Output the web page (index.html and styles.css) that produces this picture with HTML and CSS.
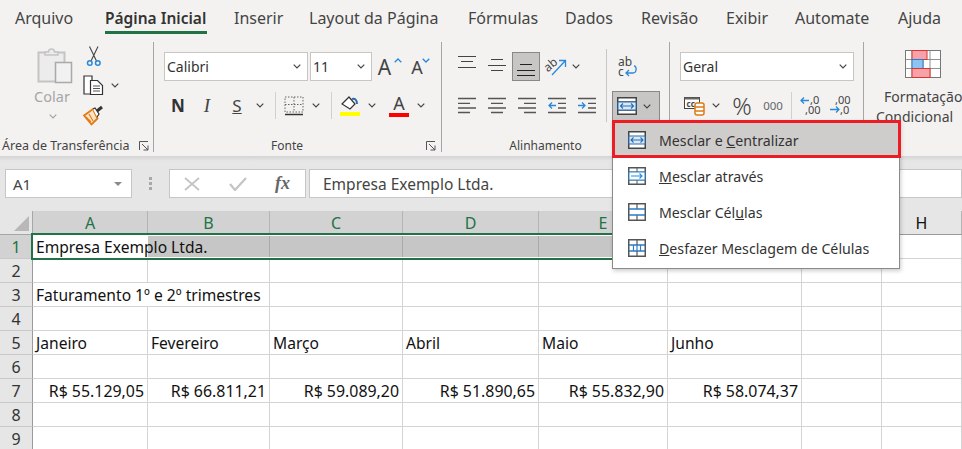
FILE: index.html
```html
<!DOCTYPE html>
<html lang="pt-BR">
<head>
  <meta charset="UTF-8" />
  <title>Mesclar e Centralizar</title>
  <link rel="stylesheet" href="styles.css">
</head>
<body>
  <svg class="sprite" width="0" height="0">
    <symbol id="chev" viewBox="0 0 8 5"><path d="M.7.7 4 4l3.3-3.3" fill="none" stroke="#444" stroke-width="1.2"/></symbol>
    <symbol id="launch" viewBox="0 0 10 10"><path d="M.5 9V.5H9M3 3l6 6M9 4.500V9H4.500" fill="none" stroke="#555" stroke-width="1"/></symbol>
  </svg>

  <nav class="tabs">
    <span class="tab t-arquivo">Arquivo</span>
    <span class="tab tab-active">Página Inicial</span>
    <span class="tab t-inserir">Inserir</span>
    <span class="tab t-layout">Layout da Página</span>
    <span class="tab t-formulas">Fórmulas</span>
    <span class="tab t-dados">Dados</span>
    <span class="tab t-revisao">Revisão</span>
    <span class="tab t-exibir">Exibir</span>
    <span class="tab t-automate">Automate</span>
    <span class="tab">Ajuda</span>
  </nav>

  <section class="ribbon">
    <div class="group g-clip">
      <div class="clip-body">
        <div class="paste">
          <svg width="36" height="38" viewBox="0 0 36 38">
            <rect x="1.500" y="6.500" width="26" height="29" fill="#ececec" stroke="#c4c4c4" stroke-width="2"/>
            <path d="M8 9V6h3.500a3 3 0 0 1 6 0H21v3z" fill="#ececec" stroke="#c4c4c4" stroke-width="1.500"/>
            <rect x="18.500" y="16.500" width="16" height="20" fill="#f1f1f1" stroke="#a9a9a9" stroke-width="1.500"/>
          </svg>
          <span class="paste-label">Colar</span>
          <svg class="chev-paste" width="8" height="5"><use href="#chev" opacity=".45"/></svg>
        </div>
        <div class="clip-tools">
          <svg class="scissors" width="16" height="22" viewBox="0 0 16 22">
            <path d="M3.500 1.500 10.500 16M12 1.500 5 16" fill="none" stroke="#444" stroke-width="1.100"/>
            <circle cx="3.800" cy="18" r="2.300" fill="none" stroke="#2b88d8" stroke-width="1.500"/>
            <circle cx="11.800" cy="18" r="2.300" fill="none" stroke="#2b88d8" stroke-width="1.500"/>
          </svg>
          <div class="copy-row">
            <svg width="22" height="22" viewBox="0 0 22 22">
              <path d="M8 20H2V2h8l0 4" fill="#fff" stroke="#333" stroke-width="1.200"/>
              <path d="M8.500 6.500h7l5 5v9h-12z" fill="#fff" stroke="#333" stroke-width="1.200"/>
              <path d="M11 12h7M11 14.500h7M11 17h7" stroke="#555" stroke-width="1"/>
            </svg>
            <svg class="chev" width="8" height="5"><use href="#chev"/></svg>
          </div>
          <svg width="22" height="21" viewBox="0 0 22 21">
            <path d="M2 10.500 11 4l4.500 9.500-6 6z" fill="#fbe3c8" stroke="#e07a12" stroke-width="1.800"/>
            <path d="M4 12l5 5M7 9l4 7" stroke="#e07a12" stroke-width="1.100"/>
            <path d="M11 4l2-1 4 6-2 3" fill="#fff" stroke="#333" stroke-width="1.200"/>
            <path d="M15 6l5-4" stroke="#333" stroke-width="3"/>
          </svg>
        </div>
      </div>
      <div class="group-label clip-label"><span>Área de Transferência</span><svg width="10" height="10"><use href="#launch"/></svg></div>
    </div>

    <div class="group g-font">
      <div class="row">
        <div class="select w-144">Calibri<svg width="8" height="5"><use href="#chev"/></svg></div>
        <div class="select w-62">11<svg width="8" height="5"><use href="#chev"/></svg></div>
        <span class="tool w-33 big-a">A<svg class="caret" width="8" height="5" viewBox="0 0 8 5"><path d="M.7 4.300 4 1l3.300 3.300" fill="none" stroke="#2b88d8" stroke-width="1.300"/></svg></span>
        <span class="tool w-28 big-a small-a">A<svg class="caret" width="8" height="5" viewBox="0 0 8 5"><path d="M.7.7 4 4l3.300-3.300" fill="none" stroke="#2b88d8" stroke-width="1.300"/></svg></span>
      </div>
      <div class="row row-b">
        <span class="tool w-28 t-bold">N</span>
        <span class="tool w-30 t-italic">I</span>
        <span class="tool w-30 t-under">S</span>
        <span class="tool w-16"><svg width="8" height="5"><use href="#chev"/></svg></span>
        <span class="tool w-14"><i class="vbar"></i></span>
        <span class="tool w-24">
          <svg width="20" height="20" viewBox="0 0 20 20"><path d="M1 1h18v15H1zM10 1v15M1 8.500h18" fill="none" stroke="#666" stroke-width="1" stroke-dasharray="1.500 1.500"/><path d="M1 18.500h18" stroke="#333" stroke-width="1.500"/></svg>
        </span>
        <span class="tool w-20"><svg width="8" height="5"><use href="#chev"/></svg></span>
        <span class="tool w-10"><i class="vbar"></i></span>
        <span class="tool w-28">
          <svg width="20" height="21" viewBox="0 0 20 21"><path d="M2 9 9 2l6 7-5 5z" fill="#fff" stroke="#333" stroke-width="1.200"/><path d="M12 4c3-1 5 1 5 5" fill="none" stroke="#2b6cb0" stroke-width="2"/><path d="M0 17h20v4H0z" fill="#ffff00"/></svg>
        </span>
        <span class="tool w-16"><svg width="8" height="5"><use href="#chev"/></svg></span>
        <span class="tool w-38"><span class="color-a">A</span></span>
        <span class="tool w-6"><svg width="8" height="5"><use href="#chev"/></svg></span>
      </div>
      <div class="group-label font-label"><span>Fonte</span><svg width="10" height="10"><use href="#launch"/></svg></div>
    </div>

    <div class="group g-align">
      <div class="align-cols">
        <div class="align-main">
          <div class="row">
            <span class="tool w-30"><svg width="18" height="29" viewBox="0 0 18 29"><path d="M0 4.500h18M3 9.500h12M0 15.500h18" stroke="#444"/></svg></span>
            <span class="tool w-30"><svg width="18" height="29" viewBox="0 0 18 29"><path d="M3 7.500h12M0 13.500h18M3 18.500h12" stroke="#444"/></svg></span>
            <span class="tool w-28 tool-on"><svg width="18" height="27" viewBox="0 0 18 27"><path d="M3 11.500h12M0 17.500h18M0 22.500h18" stroke="#222"/></svg></span>
            <span class="tool w-32">
              <svg class="icon-text" width="22" height="20" viewBox="0 0 22 20"><text x="0" y="12" class="orient" transform="rotate(-40 6 10)">ab</text><path d="M7 18 20 4M14 3.500h6.500V10" fill="none" stroke="#2b88d8" stroke-width="1.300"/></svg>
            </span>
            <span class="tool w-8"><svg width="8" height="5"><use href="#chev"/></svg></span>
          </div>
          <div class="row row-b">
            <span class="tool w-30"><svg width="18" height="17" viewBox="0 0 18 17"><path d="M0 1.500h18M0 6.300h12M0 11h18M0 15.500h12" stroke="#555" stroke-width="1.300"/></svg></span>
            <span class="tool w-30"><svg width="18" height="17" viewBox="0 0 18 17"><path d="M0 1.500h18M3 6.300h12M0 11h18M3 15.500h12" stroke="#555" stroke-width="1.300"/></svg></span>
            <span class="tool w-30"><svg width="18" height="17" viewBox="0 0 18 17"><path d="M0 1.500h18M6 6.300h12M0 11h18M6 15.500h12" stroke="#555" stroke-width="1.300"/></svg></span>
            <span class="tool w-30"><svg width="18" height="17" viewBox="0 0 18 17"><path d="M0 1.500h18M10 6.300h8M10 11h8M0 15.500h18" stroke="#555" stroke-width="1.300"/><path d="M8 8.500H1M4 5.500l-3 3 3 3" fill="none" stroke="#2b88d8" stroke-width="1.300"/></svg></span>
            <span class="tool w-30"><svg width="18" height="17" viewBox="0 0 18 17"><path d="M0 1.500h18M10 6.300h8M10 11h8M0 15.500h18" stroke="#555" stroke-width="1.300"/><path d="M0 8.500h7M4 5.500l3 3-3 3" fill="none" stroke="#2b88d8" stroke-width="1.300"/></svg></span>
          </div>
        </div>
        <i class="align-sep"></i>
        <div class="align-merge">
          <div class="row">
            <span class="tool w-32">
              <svg class="icon-text" width="20" height="20" viewBox="0 0 20 20"><text x="0" y="9" class="wrap-t">ab</text><text x="0" y="19" class="wrap-t">c</text><path d="M16 9c3 0 3 7-1 7H8M11 13l-3 3 3 3" fill="none" stroke="#2b88d8" stroke-width="1.300"/></svg>
            </span>
          </div>
          <div class="row row-b">
            <div class="merge-btn">
              <svg width="20" height="18" viewBox="0 0 20 18">
                <rect x=".75" y=".75" width="18.500" height="16.500" fill="#fff" stroke="#444" stroke-width="1.500"/>
                <path d="M1 5h18M1 13h18" stroke="#444" stroke-width="1.500"/><rect x="1" y="5" width="18" height="8" fill="#dbe9f7" stroke="#2b6cb0"/>
                <path d="M3 9h14M6 6.500 3.500 9 6 11.500M14 6.500 16.500 9 14 11.500" fill="none" stroke="#2b6cb0" stroke-width="1.100"/>
              </svg>
              <svg width="8" height="5"><use href="#chev"/></svg>
            </div>
          </div>
        </div>
      </div>
      <div class="group-label align-label"><span>Alinhamento</span></div>
    </div>

    <div class="group g-num">
      <div class="row">
        <div class="select w-174">Geral<svg width="8" height="5"><use href="#chev"/></svg></div>
      </div>
      <div class="row row-b">
        <span class="tool w-28">
          <svg class="icon-text" width="21" height="20" viewBox="0 0 21 20"><rect x=".5" y="1.500" width="15" height="11" fill="#fff" stroke="#444"/><rect x=".5" y="1.500" width="15" height="2" fill="#666"/><text x="2.500" y="11" class="cur">cc</text><rect x="11" y="7" width="9" height="12" rx="2" fill="#fff" stroke="#e07a12" stroke-width="1.500"/><path d="M11 11h9M11 15h9" stroke="#e07a12" stroke-width="1.300"/></svg>
        </span>
        <span class="tool w-16"><svg width="8" height="5"><use href="#chev"/></svg></span>
        <span class="tool w-36 t-pct">%</span>
        <span class="tool w-26 t-000">000</span>
        <span class="tool w-10"><i class="vbar"></i></span>
        <span class="tool w-28">
          <svg class="icon-text" width="20" height="19" viewBox="0 0 20 19"><path d="M9 4.500H1M4 1.500l-3 3 3 3" fill="none" stroke="#2b88d8" stroke-width="1.300"/><text x="10" y="8" class="dec">,0</text><text x="5" y="18" class="dec">,00</text></svg>
        </span>
        <span class="tool w-32">
          <svg class="icon-text" width="20" height="19" viewBox="0 0 20 19"><text x="5" y="8" class="dec">,00</text><path d="M0 13.500h9M6 10.500l3 3-3 3" fill="none" stroke="#2b88d8" stroke-width="1.300"/><text x="10" y="18" class="dec">,0</text></svg>
        </span>
      </div>
    </div>

    <div class="group g-styles">
      <svg class="cf-icon" width="36" height="28" viewBox="0 0 36 28">
        <rect x=".5" y=".5" width="35" height="27" fill="#fff" stroke="#777"/>
        <path d="M7 1v26M18 1v26M25 1v26M1 9.500h34M1 18.500h34" stroke="#777" stroke-width=".8" fill="none"/>
        <rect x="7" y=".5" width="15" height="9" fill="#f7a1a8" stroke="#d9362f"/>
        <rect x="7" y="9.500" width="11" height="9" fill="#8ec4f2" stroke="#2b7cc9"/>
        <rect x="7" y="18.500" width="18" height="9" fill="#f7a1a8" stroke="#d9362f"/>
      </svg>
      <span class="cf-line1">Formatação</span>
      <span class="cf-line2">Condicional</span>
    </div>
  </section>

  <section class="formula-band">
    <div class="name-box">A1<i class="name-arrow"></i></div>
    <div class="grip"><i></i><i></i><i></i></div>
    <div class="fx-box">
      <svg width="16" height="14" viewBox="0 0 16 14"><path d="M1 1l14 12M15 1 1 13" stroke="#c4c4c4" stroke-width="1.800"/></svg>
      <svg width="18" height="14" viewBox="0 0 18 14"><path d="M1 7l5 6L17 1" fill="none" stroke="#c4c4c4" stroke-width="2.200"/></svg>
      <span class="fx">fx</span>
    </div>
    <div class="formula-input">Empresa Exemplo Ltda.</div>
  </section>

  <section class="sheet">
    <div class="corner"><i></i></div>
    <div class="hd sel">A</div><div class="hd sel">B</div><div class="hd sel">C</div><div class="hd sel">D</div><div class="hd sel">E</div><div class="hd sel">F</div><div class="hd sel">G</div><div class="hd">H</div>

    <div class="rh sel">1</div>
    <div class="c over a1">Empresa Exemplo Ltda.</div><div class="c s"></div><div class="c s"></div><div class="c s"></div><div class="c s"></div><div class="c s"></div><div class="c s"></div><div class="c"></div>

    <div class="rh">2</div>
    <div class="c"></div><div class="c"></div><div class="c"></div><div class="c"></div><div class="c"></div><div class="c"></div><div class="c"></div><div class="c"></div>

    <div class="rh">3</div>
    <div class="c over">Faturamento 1º e 2º trimestres</div><div class="c"></div><div class="c"></div><div class="c"></div><div class="c"></div><div class="c"></div><div class="c"></div><div class="c"></div>

    <div class="rh">4</div>
    <div class="c"></div><div class="c"></div><div class="c"></div><div class="c"></div><div class="c"></div><div class="c"></div><div class="c"></div><div class="c"></div>

    <div class="rh">5</div>
    <div class="c">Janeiro</div><div class="c">Fevereiro</div><div class="c">Março</div><div class="c">Abril</div><div class="c">Maio</div><div class="c">Junho</div><div class="c"></div><div class="c"></div>

    <div class="rh">6</div>
    <div class="c"></div><div class="c"></div><div class="c"></div><div class="c"></div><div class="c"></div><div class="c"></div><div class="c"></div><div class="c"></div>

    <div class="rh">7</div>
    <div class="c n">R$ 55.129,05</div><div class="c n">R$ 66.811,21</div><div class="c n">R$ 59.089,20</div><div class="c n">R$ 51.890,65</div><div class="c n">R$ 55.832,90</div><div class="c n">R$ 58.074,37</div><div class="c"></div><div class="c"></div>

    <div class="rh">8</div>
    <div class="c"></div><div class="c"></div><div class="c"></div><div class="c"></div><div class="c"></div><div class="c"></div><div class="c"></div><div class="c"></div>

    <div class="rh">9</div>
    <div class="c"></div><div class="c"></div><div class="c"></div><div class="c"></div><div class="c"></div><div class="c"></div><div class="c"></div><div class="c"></div>

    <div class="selection"></div>
  </section>

  <ul class="merge-menu">
    <li class="menu-item menu-item-on">
      <svg width="18" height="18" viewBox="0 0 18 18"><rect x=".75" y=".75" width="16.500" height="16.500" fill="#fff" stroke="#444" stroke-width="1.500"/><rect x="1" y="5" width="16" height="8" fill="#dbe9f7" stroke="#2b6cb0"/><path d="M3 9h12M5.500 6.500 3 9l2.500 2.500M12.500 6.500 15 9l-2.500 2.500" fill="none" stroke="#2b6cb0" stroke-width="1.100"/></svg>
      <span>Mesclar e <u>C</u>entralizar</span>
    </li>
    <li class="menu-item">
      <svg width="18" height="18" viewBox="0 0 18 18"><rect x=".75" y=".75" width="16.500" height="16.500" fill="#fff" stroke="#555" stroke-width="1.500"/><path d="M1 5h16M1 13h16M9 1v4M9 13v4" stroke="#555"/><rect x="1" y="5" width="16" height="8" fill="#fff" stroke="#2b88d8"/><path d="M3 9h11M11.500 6.500 14 9l-2.500 2.500" fill="none" stroke="#2b88d8" stroke-width="1.100"/></svg>
      <span><u>M</u>esclar através</span>
    </li>
    <li class="menu-item">
      <svg width="18" height="18" viewBox="0 0 18 18"><rect x=".75" y=".75" width="16.500" height="16.500" fill="#fff" stroke="#555" stroke-width="1.500"/><path d="M9 1v5M9 12v5" stroke="#555" stroke-width="1.200"/><path d="M1 6h16M1 12h16" stroke="#2b7cc9" stroke-width="1.500"/></svg>
      <span>Mesclar Cél<u>u</u>las</span>
    </li>
    <li class="menu-item">
      <svg width="18" height="18" viewBox="0 0 18 18"><rect x=".75" y=".75" width="16.500" height="16.500" fill="#fff" stroke="#555" stroke-width="1.500"/><path d="M1 6h16M1 12h16" stroke="#2b7cc9" stroke-width="1.500"/><path d="M5.500 6v6M9 6v6M12.500 6v6" stroke="#2b7cc9" stroke-width="1.200"/><path d="M9 1v5M9 12v5" stroke="#555" stroke-width="1.200"/></svg>
      <span><u>D</u>esfazer Mesclagem de Células</span>
    </li>
  </ul>
</body>
</html>
```

FILE: styles.css
```css
* {
  box-sizing: border-box;
}
html, body {
  height: 100%;
}
body {
  margin: 0;
  width: 962px;
  height: 449px;
  overflow: hidden;
  position: relative;
  font-family: "Noto Sans", "Open Sans", sans-serif;
  color: #444;
  background-color: #fff;
}
.sprite {
  position: absolute;
}
svg {
  display: block;
  flex: none;
}
.icon-text {
  overflow: visible;
}

/* tabs */
.tabs {
  height: 36px;
  padding-left: 15px;
  display: flex;
  align-items: flex-start;
  background-color: #f3f2f1;
  font-size: 16px;
}
.tab {
  height: 34px;
  line-height: 36px;
  margin-right: 28px;
  white-space: nowrap;
  flex: none;
}
.t-arquivo { width: 62px; }
.t-inserir { width: 47px; }
.t-layout { width: 131px; }
.t-formulas { width: 69px; }
.t-dados { width: 48px; }
.t-revisao { width: 57px; }
.t-exibir { width: 41px; }
.t-automate { width: 75px; }
.tab-active {
  width: 102px;
  margin-right: 27px;
  font-weight: 600;
  font-size: 15.500px;
  color: #333;
  border-bottom: 3px solid #217346;
}

/* ribbon */
.ribbon {
  height: 120px;
  padding-top: 6px;
  display: flex;
  background-color: #f3f2f1;
}
.group {
  height: 110px;
  padding: 10px 0 0 10px;
  border-right: 1px solid #a8a6a4;
  position: relative;
  flex: none;
}
.g-clip { width: 154px; padding: 3px 0 0 0; }
.g-font { width: 288px; }
.g-align { width: 228px; }
.g-num { width: 194px; }
.g-styles { width: 98px; border-right: none; overflow: hidden; padding: 8px 0 0; font-size: 14px; line-height: 20px; }
.group-label {
  position: absolute;
  left: 0;
  right: 0;
  bottom: -2px;
  height: 16px;
  font-size: 12px;
  line-height: 16px;
  text-align: center;
}
.row {
  display: flex;
  align-items: center;
  height: 29px;
}
.row-b {
  margin-top: 10px;
}
.tool {
  height: 29px;
  display: flex;
  align-items: center;
  justify-content: center;
  flex: none;
}
.w-6 { width: 6px; }
.w-8 { width: 8px; }
.w-10 { width: 10px; }
.w-14 { width: 14px; }
.w-16 { width: 16px; }
.w-20 { width: 20px; }
.w-24 { width: 24px; }
.w-26 { width: 26px; }
.w-28 { width: 28px; }
.w-30 { width: 30px; }
.w-32 { width: 32px; }
.w-33 { width: 33px; }
.w-36 { width: 36px; }
.w-38 { width: 38px; }
.w-62 { width: 62px; margin-left: 2px; }
.w-144 { width: 144px; }
.w-174 { width: 174px; }
.vbar {
  display: block;
  width: 1px;
  height: 27px;
  background-color: #d2d0ce;
}
.select {
  height: 29px;
  padding: 0 6px 0 2px;
  display: flex;
  align-items: center;
  justify-content: space-between;
  background-color: #fff;
  border: 1px solid #c8c6c4;
  font-size: 14px;
  color: #333;
  flex: none;
}

/* clipboard */
.clip-body {
  display: flex;
  padding-left: 35px;
}
.paste {
  width: 45px;
  padding: 1px 0 0 2px;
}
.paste-label {
  display: block;
  width: 36px;
  margin: 1px 0 0 -3px;
  font-size: 14.500px;
  line-height: 22px;
  text-align: center;
  color: #a6a6a6;
}
.chev-paste {
  margin: 7px 0 0 12px;
}
.clip-tools {
  padding-left: 2px;
}
.scissors {
  margin-left: 4px;
}
.copy-row {
  display: flex;
  align-items: center;
  margin-top: 7px;
}
.copy-row + svg {
  margin-top: 9px;
}
.chev {
  margin-left: 7px;
}
.clip-label,
.font-label {
  display: flex;
  align-items: center;
}
.clip-label { padding-left: 2px; font-size: 12.500px; }
.clip-label svg { margin-left: 10px; }
.font-label { padding-left: 117px; }
.font-label svg { margin-left: 123px; }

/* font */
.big-a {
  position: relative;
  font-size: 21px;
  color: #444;
  padding-right: 8px;
}
.small-a {
  font-size: 18px;
  padding-right: 4px;
}
.caret {
  position: absolute;
  right: 3px;
  top: 6px;
}
.t-bold {
  font-size: 17px;
  font-weight: 700;
  color: #333;
}
.t-italic {
  font-family: "Liberation Serif", serif;
  font-style: italic;
  font-size: 19px;
}
.t-under {
  font-size: 17px;
  text-decoration: underline;
}
.color-a {
  width: 20px;
  height: 22px;
  font-size: 18px;
  line-height: 17px;
  text-align: center;
  border-bottom: 4px solid #f00;
}

/* alignment */
.align-cols {
  display: flex;
}
.align-main {
  width: 154px;
}
.align-sep {
  width: 1px;
  height: 73px;
  margin-top: -3px;
  background-color: #c8c6c4;
}
.align-merge {
  padding-left: 5px;
}
.tool-on {
  background-color: #c8c6c4;
  border: 1px solid #8a8886;
}
.merge-btn {
  width: 48px;
  height: 29px;
  padding: 0 8px 0 4px;
  display: flex;
  align-items: center;
  justify-content: space-between;
  background-color: #c8c6c4;
  border: 1px solid #8a8886;
  border-bottom: none;
}
.align-label {
  padding-right: 20px;
}
.orient {
  font-size: 12px;
  fill: #444;
}
.wrap-t {
  font-size: 12px;
  fill: #444;
}

/* number */
.cur {
  font-size: 8px;
  font-weight: 700;
  fill: #444;
}
.t-pct {
  font-size: 24px;
  font-weight: 300;
}
.t-000 {
  font-size: 11.500px;
  color: #666;
}
.dec {
  font-size: 11px;
  fill: #444;
}

/* styles */
.cf-icon {
  margin: 0 0 9px 41px;
}
.cf-line1,
.cf-line2 {
  display: block;
  white-space: nowrap;
}
.cf-line1 { padding-left: 20px; }
.cf-line2 { padding-left: 12px; }

/* formula bar */
.formula-band {
  height: 55px;
  padding: 13px 0 13px 5px;
  display: flex;
  background: linear-gradient(#d4d4d4, #e6e6e6 5px);
}
.name-box,
.fx-box,
.formula-input {
  height: 29px;
  background-color: #fff;
  border: 1px solid #c6c6c6;
  display: flex;
  align-items: center;
  font-size: 15.500px;
  color: #444;
}
.name-box {
  width: 127px;
  padding: 0 9px 0 7px;
  justify-content: space-between;
  font-size: 15px;
}
.name-arrow {
  width: 0;
  height: 0;
  border: 4px solid transparent;
  border-top: 4px solid #8a8a8a;
  border-bottom: none;
}
.grip {
  width: 37px;
  display: flex;
  flex-direction: column;
  align-items: center;
  justify-content: center;
  gap: 2px;
}
.grip i {
  width: 3px;
  height: 3px;
  background-color: #a8a8a8;
}
.fx-box {
  width: 137px;
  padding-left: 14px;
}
.fx-box svg:nth-child(2) {
  margin-left: 29px;
}
.fx {
  margin-left: 28px;
  font-family: "Liberation Serif", serif;
  font-style: italic;
  font-weight: 700;
  font-size: 18px;
  color: #666;
}
.formula-input {
  flex: 1;
  margin-left: 3px;
  padding-left: 13px;
}

/* sheet */
.sheet {
  height: 240px;
  display: grid;
  grid-template-columns: 33px 115px 122px 133px 136px 129px 134px 80px 80px;
  grid-auto-rows: 24px;
  position: relative;
  font-size: 15.600px;
  color: #111;
}
.corner {
  background-color: #e6e6e6;
  border-right: 1px solid #a6a6a6;
  border-bottom: 1px solid #a6a6a6;
  position: relative;
}
.corner i {
  position: absolute;
  right: 3px;
  bottom: 3px;
  width: 0;
  height: 0;
  border-left: 15px solid transparent;
  border-bottom: 15px solid #b8b8b8;
}
.hd {
  background-color: #e6e6e6;
  border-right: 1px solid #b4b4b4;
  border-bottom: 1px solid #9a9a9a;
  text-align: center;
  font-size: 16px;
  line-height: 25px;
}
.hd.sel {
  background-color: #d2d2d2;
  color: #217346;
}
.rh {
  background-color: #e6e6e6;
  border-right: 1px solid #9a9a9a;
  border-bottom: 1px solid #c8c8c8;
  text-align: center;
  font-size: 16px;
  line-height: 24px;
  color: #333;
}
.rh.sel {
  background-color: #d2d2d2;
  color: #217346;
}
.c {
  padding: 0 3px;
  line-height: 25px;
  border-right: 1px solid #d4d4d4;
  border-bottom: 1px solid #d4d4d4;
  white-space: nowrap;
}
.c.n {
  text-align: right;
  padding-right: 3px;
  font-size: 15.900px;
}
.c.s {
  background-color: #c6c6c6;
  border-right-color: #aaa;
}
.c.over {
  position: relative;
  z-index: 1;
  border-right: none;
}
.selection {
  position: absolute;
  grid-row: 2 / 3;
  grid-column: 2 / 9;
  top: -2px;
  bottom: -1px;
  left: -2px;
  right: 0;
  z-index: 2;
  border: 2px solid #217346;
  box-shadow: inset 0 0 0 1px #fff;
}

/* merge menu */
.merge-menu {
  position: absolute;
  left: 612px;
  top: 120px;
  width: 288px;
  height: 149px;
  margin: 0;
  padding: 0;
  list-style: none;
  z-index: 5;
  background-color: #fff;
  border: 1px solid #8a8a8a;
  box-shadow: 1px 2px 4px rgba(0, 0, 0, 0.2);
}
.menu-item {
  height: 36px;
  padding-left: 15px;
  display: flex;
  align-items: center;
  gap: 13px;
  font-size: 14.200px;
  color: #333;
  white-space: nowrap;
}
.menu-item-on {
  height: 38px;
  margin: -1px -2px 0 -1px;
  padding: 2px 0 0 13px;
  background-color: #cfcdcb;
  border: 3px solid #ed1c24;
}
```
